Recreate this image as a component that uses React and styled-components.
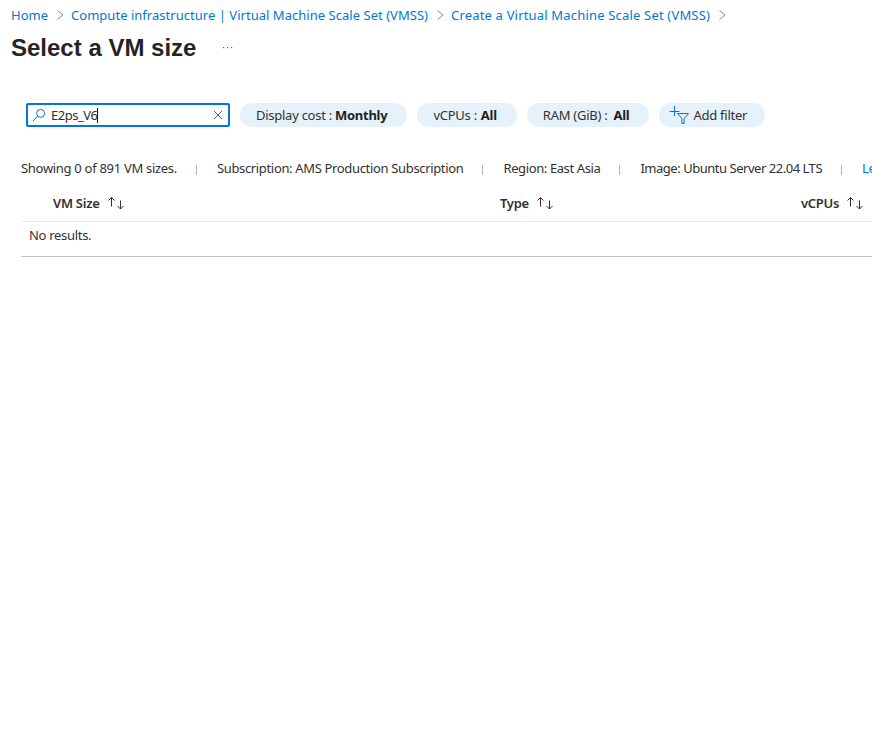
import React from "react";
import styled, { createGlobalStyle } from "styled-components";

const Global = createGlobalStyle`
  html, body { margin: 0; padding: 0; background: #fff; overflow: hidden; }
  body { font-family: "Noto Sans", "Open Sans", sans-serif; color: #323130; font-size: 13px; }
`;
const Page = styled.div`
  width: 872px; height: 733px; overflow: hidden; display: flex; flex-direction: column;
`;
const Crumbs = styled.nav`
  display: flex; align-items: center; height: 18px; margin: 6px 0 0 11px; white-space: nowrap;
`;
const Crumb = styled.span`
  color: #0078d4; font-size: 13px; letter-spacing: ${p => p.$ls}px; line-height: 18px;
`;
const Chevron = styled.svg`
  width: 8px; height: 10px; margin: 0 7px 0 8px; flex: none;
`;
const TitleRow = styled.div`
  display: flex; align-items: center; height: 30px; margin: 9px 0 0 11px;
`;
const Title = styled.h1`
  margin: 0; font: 700 24px/30px "Liberation Sans", Arial, sans-serif; color: #252423;
`;
const More = styled.svg`
  width: 12px; height: 4px; margin-left: 26px; flex: none;
`;
const Filters = styled.div`
  display: flex; align-items: center; gap: 10px; margin: 40px 0 0 26px; height: 24px;
`;
const Search = styled.div`
  box-sizing: border-box; width: 204px; height: 24px; border: 2px solid #0078d4; border-radius: 2px;
  display: flex; align-items: center; padding: 0 5px 0 4px;
`;
const SearchText = styled.span`
  font-size: 13px; letter-spacing: -0.5px; margin-left: 5px; line-height: 18px; color: #323130; flex: 1;
  display: flex; align-items: center;
`;
const Caret = styled.i`
  display: inline-block; width: 1px; height: 15px; background: #111;
`;
const Chip = styled.div`
  box-sizing: border-box; height: 24px; border-radius: 12px; background: #e5f1fb;
  display: flex; align-items: center; padding: 0 20px 0 16px; font-size: 13px;
  letter-spacing: -0.26px; white-space: nowrap; color: #323130;
  b { font-weight: 700; margin-left: ${p => p.$gap || 3}px; color: #201f1e; }
`;
const AddChip = styled(Chip)`
  padding: 0 18px 0 10px; gap: 3px;
`;
const Info = styled.div`
  display: flex; align-items: center; height: 18px; margin: 32px 0 0 21px; white-space: nowrap;
  font-size: 13px; color: #323130;
`;
const InfoText = styled.span`
  letter-spacing: ${p => p.$ls}px;
`;
const Sep = styled.i`
  display: block; width: 1px; height: 10px; background: #b3b3b3; margin: 4px 20px 0 19px; flex: none;
`;
const InfoLink = styled.span`
  color: #0078d4; letter-spacing: -0.3px;
`;
const Table = styled.div`
  margin: 9px 0 0 21px; width: 851px;
`;
const Head = styled.div`
  display: grid; grid-template-columns: 479px 301px 1fr; height: 33px; padding-bottom: 2px; align-items: center;
  border-bottom: 1px solid #edebe9;
`;
const HeadCell = styled.div`
  display: flex; align-items: center; gap: 7px; padding-left: ${p => p.$indent || 0}px;
  font-size: 13px; font-weight: 600; letter-spacing: -0.27px; color: #323130; white-space: nowrap;
`;
const Empty = styled.div`
  box-sizing: content-box; height: 26px; padding: 0 0 8px 8px; display: flex; align-items: center; font-size: 13px;
  letter-spacing: -0.3px; border-bottom: 1px solid #c8c6c4; color: #323130;
`;
const SortSvg = styled.svg`
  width: 17px; height: 15px; flex: none;
`;

const Chev = () => (
  <Chevron viewBox="0 0 8 10"><path d="M1.5 .5 7 5 1.5 9.5" fill="none" stroke="#8a8886" strokeWidth="1" /></Chevron>
);
const Sort = () => (
  <SortSvg viewBox="0 0 17 15" fill="none" stroke="#323130" strokeWidth="1">
    <path d="M4.5 11.5V2.5M1.5 5.5 4.5 2.5 7.5 5.5" />
    <path d="M13.5 5.5V14M10.5 11 13.5 14 16.5 11" />
  </SortSvg>
);

export default function App() {
  return (
    <Page>
      <Global />
      <Crumbs>
        <Crumb $ls={0}>Home</Crumb><Chev />
        <Crumb $ls={0.03}>Compute infrastructure | Virtual Machine Scale Set (VMSS)</Crumb><Chev />
        <Crumb $ls={0.18}>Create a Virtual Machine Scale Set (VMSS)</Crumb><Chev />
      </Crumbs>
      <TitleRow>
        <Title>Select a VM size</Title>
        <More viewBox="0 0 12 4" fill="#605e5c">
          <rect x="1" y="1" width="1.2" height="1.2" /><rect x="5" y="1" width="1.2" height="1.2" /><rect x="9" y="1" width="1.2" height="1.2" />
        </More>
      </TitleRow>
      <Filters>
        <Search>
          <svg width="14" height="14" viewBox="0 0 14 14" fill="none" stroke="#0078d4" strokeWidth="1">
            <circle cx="8.6" cy="5.4" r="4" /><path d="M5.6 8.2 1 13" />
          </svg>
          <SearchText>E2ps_V6<Caret /></SearchText>
          <svg width="10" height="10" viewBox="0 0 10 10" fill="none" stroke="#605e5c" strokeWidth="1">
            <path d="M1 1l8 8M9 1l-8 8" />
          </svg>
        </Search>
        <Chip>Display cost : <b>Monthly</b></Chip>
        <Chip $gap={4}>vCPUs : <b>All</b></Chip>
        <Chip $gap={6}>RAM (GiB) : <b>All</b></Chip>
        <AddChip>
          <svg width="21" height="19" viewBox="0 0 21 19" fill="none" stroke="#0078d4" strokeWidth="1">
            <path d="M5.5 0v10M.5 5.5h10" />
            <path d="M8.5 7.5h11l-4.4 5v5h-2.2v-5z" />
          </svg>
          Add filter
        </AddChip>
      </Filters>
      <Info>
        <InfoText $ls={-0.3}>Showing 0 of 891 VM sizes.</InfoText><Sep />
        <InfoText $ls={-0.34}>Subscription: AMS Production Subscription</InfoText><Sep />
        <InfoText $ls={-0.39}>Region: East Asia</InfoText><Sep />
        <InfoText $ls={-0.47}>Image: Ubuntu Server 22.04 LTS</InfoText><Sep />
        <InfoLink>Learn more about VM sizes</InfoLink>
      </Info>
      <Table>
        <Head>
          <HeadCell $indent={32}>VM Size <Sort /></HeadCell>
          <HeadCell>Type <Sort /></HeadCell>
          <HeadCell>vCPUs <Sort /></HeadCell>
        </Head>
        <Empty>No results.</Empty>
      </Table>
    </Page>
  );
}
